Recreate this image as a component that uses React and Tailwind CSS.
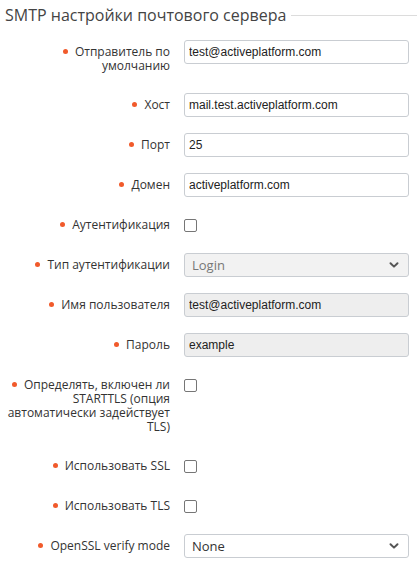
import React from "react";

const fields = [
  { label: ["Отправитель по", "умолчанию"], type: "text", value: "test@activeplatform.com" },
  { label: ["Хост"], type: "text", value: "mail.test.activeplatform.com" },
  { label: ["Порт"], type: "text", value: "25" },
  { label: ["Домен"], type: "text", value: "activeplatform.com" },
  { label: ["Аутентификация"], type: "checkbox" },
  { label: ["Тип аутентификации"], type: "select", value: "Login", disabled: true },
  { label: ["Имя пользователя"], type: "text", value: "test@activeplatform.com", disabled: true },
  { label: ["Пароль"], type: "text", value: "example", disabled: true },
  {
    label: ["Определять, включен ли", "STARTTLS (опция", "автоматически задействует", "TLS)"],
    type: "checkbox",
  },
  { label: ["Использовать SSL"], type: "checkbox" },
  { label: ["Использовать TLS"], type: "checkbox" },
  { label: ["OpenSSL verify mode"], type: "select", value: "None" },
];

const Chevron = () => (
  <svg width="12" height="12" viewBox="0 0 12 12" className="absolute right-[9px] top-1/2 -translate-y-1/2 pointer-events-none">
    <path d="M2.5 4.2 L6 7.6 L9.5 4.2" fill="none" stroke="#555" strokeWidth="2" strokeLinecap="round" strokeLinejoin="round" />
  </svg>
);

const Control = ({ field }) => {
  if (field.type === "checkbox") {
    return (
      <div className="h-6 flex items-center">
        <span className="block w-[13px] h-[13px] border border-[#767676] rounded-[2px] bg-white" />
      </div>
    );
  }

  if (field.type === "select") {
    return (
      <div className="relative">
        <select
          disabled={field.disabled}
          defaultValue={field.value}
          className={
            "block w-full h-6 appearance-none border border-[#c9cdd2] rounded-[3px] pl-[7px] pr-7 text-[13px] leading-[22px] font-['Open_Sans',sans-serif] outline-none " +
            (field.disabled ? "bg-[#f2f2f2] text-[#777]" : "bg-white text-[#333]")
          }
        >
          <option>{field.value}</option>
        </select>
        <Chevron />
      </div>
    );
  }

  return (
    <input
      type="text"
      readOnly
      disabled={field.disabled}
      defaultValue={field.value}
      className={
        "block w-full h-6 border border-[#c9cdd2] rounded-[3px] px-1 text-[12px] text-[#222] font-['Liberation_Sans',Arial,sans-serif] outline-none " +
        (field.disabled ? "bg-[#eeeeee]" : "bg-white")
      }
    />
  );
};

export default function App() {
  return (
    <div className="bg-white w-[419px] min-h-[562px] font-['Open_Sans',sans-serif]">
      {/* Section header with trailing rule */}
      <div className="flex items-center pl-[5px] pt-[3px]">
        <h2 className="text-[16px] leading-[24px] text-[#444] whitespace-nowrap">
          SMTP настройки почтового сервера
        </h2>
        <div className="flex-1 h-px bg-[#dcdcdc] ml-[5px] mr-[2px]" />
      </div>

      <div className="flex flex-col gap-4 mt-[13px] pr-[10px]">
        {fields.map((field) => (
          <div key={field.label.join(" ")} className="flex items-start">
            <label className="w-[170px] shrink-0 text-right text-[12px] leading-[14px] text-[#333] pt-[5px] pb-[4px] whitespace-nowrap">
              <span className="inline-block w-[5px] h-[5px] rounded-full bg-[#f15a2b] mr-[7px] align-[2px]" />
              {field.label.map((line, i) => (
                <React.Fragment key={line}>
                  {i > 0 && <br />}
                  {line}
                </React.Fragment>
              ))}
            </label>
            <div className="flex-1 ml-[14px]">
              <Control field={field} />
            </div>
          </div>
        ))}
      </div>
    </div>
  );
}
